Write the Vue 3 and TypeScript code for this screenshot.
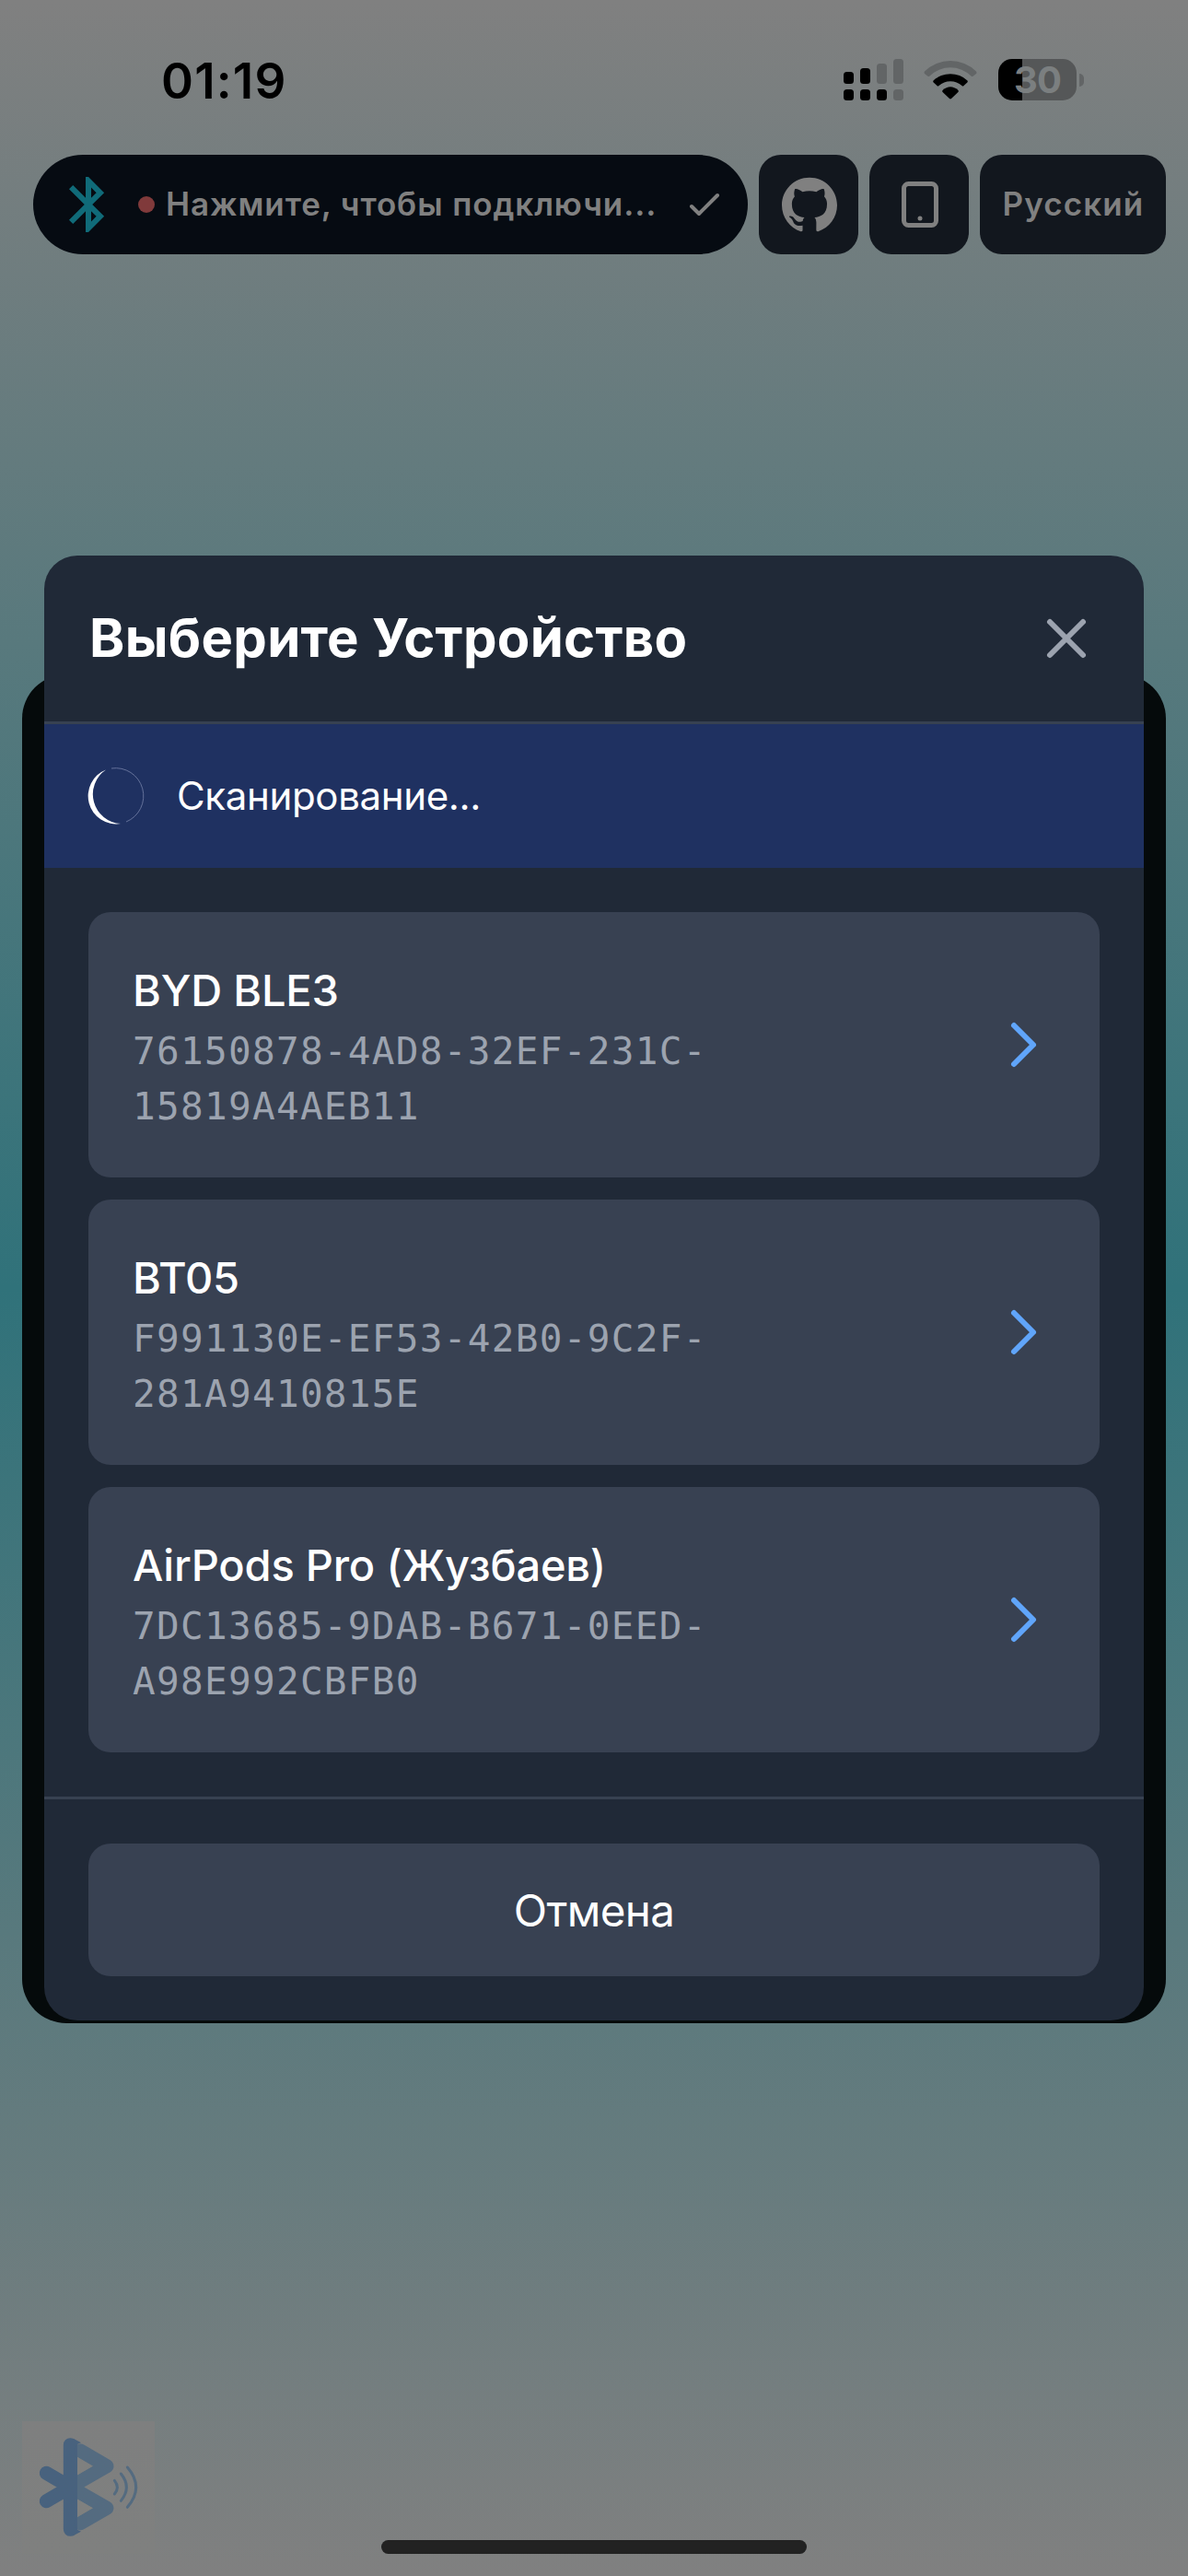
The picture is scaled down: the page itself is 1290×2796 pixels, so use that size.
<script setup lang="ts">
interface Device {
  name: string
  id: string[]
}

const devices: Device[] = [
  { name: 'BYD BLE3', id: ['76150878-4AD8-32EF-231C-', '15819A4AEB11'] },
  { name: 'BT05', id: ['F991130E-EF53-42B0-9C2F-', '281A9410815E'] },
  { name: 'AirPods Pro (Жузбаев)', id: ['7DC13685-9DAB-B671-0EED-', 'A98E992CBFB0'] },
]
</script>

<template>
  <div class="screen">
    <div class="status">
      <span class="time">01:19</span>
      <div class="indicators">
        <svg class="signal" width="65" height="45" viewBox="0 0 65 45">
          <g fill="#000">
            <rect x="0" y="14" width="11" height="13" rx="3.5" />
            <rect x="18" y="10" width="11" height="17" rx="3.5" />
            <rect x="0" y="33" width="11" height="12" rx="3.5" />
            <rect x="18" y="33" width="11" height="12" rx="3.5" />
            <rect x="36" y="33" width="11" height="12" rx="3.5" />
          </g>
          <g fill="#626566">
            <rect x="36" y="5" width="11" height="22" rx="3.5" />
            <rect x="54" y="0" width="11" height="27" rx="3.5" />
            <rect x="54" y="33" width="11" height="12" rx="3.5" />
          </g>
        </svg>
        <svg class="wifi" width="58" height="45" viewBox="0 0 58 45">
          <path d="M1 13.5 A40 40 0 0 1 57 13.5 Q58 15 57 16 L53.500 18.700 Q52.500 19.500 51.500 18.500 A32 32 0 0 0 6.500 18.500 Q5.500 19.500 4.500 18.700 L1 16 Q0 15 1 13.500Z" fill="#626566" />
          <path d="M10.500 23.500 A27 27 0 0 1 47.500 23.500 Q48.200 24.500 47.300 25.500 L43.500 29 Q42.500 30 41.500 29 A18.500 18.500 0 0 0 16.500 29 Q15.500 30 14.500 29 L10.700 25.500 Q9.800 24.500 10.500 23.500Z" fill="#000" />
          <path d="M20.500 34 Q29 26.500 37.500 34 Q38.300 35 37.400 36 L30 43 Q29 43.900 28 43 L20.600 36 Q19.700 35 20.500 34Z" fill="#000" />
        </svg>
        <div class="battery">
          <span class="battery-body"><span class="battery-level">30</span></span>
          <span class="battery-tip"></span>
        </div>
      </div>
    </div>

    <header class="topbar">
      <div class="connect">
        <svg width="72" height="72" viewBox="0 0 24 24" fill="#106b79">
          <path d="M14.880 16.290L13 18.170v-3.760l1.880 1.880zM13 5.830l1.880 1.880L13 9.580V5.830zm4.710 1.880L12 2h-1v7.580L6.410 5 5 6.410 10.590 12 5 17.580 6.410 19 11 14.410V22h1l5.710-5.710L13.410 12l4.300-4.290z" fill-rule="evenodd" />
        </svg>
        <span class="dot"></span>
        <span class="connect-text">Нажмите, чтобы подключи...</span>
        <svg class="check" width="48" height="48" viewBox="0 0 24 24" fill="none" stroke="#808080" stroke-width="2" stroke-linecap="round" stroke-linejoin="round">
          <path d="M5 13l4 4L19 7" />
        </svg>
      </div>
      <div class="tool">
        <svg class="github" width="60" height="60" viewBox="0 0 24 24" fill="#808080">
          <path d="M12 .297c-6.630 0-12 5.373-12 12 0 5.303 3.438 9.800 8.205 11.385.600.113.820-.258.820-.577 0-.285-.010-1.040-.015-2.040-3.338.724-4.042-1.610-4.042-1.610C4.422 18.070 3.633 17.700 3.633 17.700c-1.087-.744.084-.729.084-.729 1.205.084 1.838 1.236 1.838 1.236 1.070 1.835 2.809 1.305 3.495.998.108-.776.417-1.305.760-1.605-2.665-.300-5.466-1.332-5.466-5.930 0-1.310.465-2.380 1.235-3.220-.135-.303-.540-1.523.105-3.176 0 0 1.005-.322 3.300 1.230.960-.267 1.980-.399 3-.405 1.020.006 2.040.138 3 .405 2.280-1.552 3.285-1.230 3.285-1.230.645 1.653.240 2.873.120 3.176.765.840 1.230 1.910 1.230 3.220 0 4.610-2.805 5.625-5.475 5.920.420.360.810 1.096.810 2.220 0 1.606-.015 2.896-.015 3.286 0 .315.210.690.825.570C20.565 22.092 24 17.592 24 12.297c0-6.627-5.373-12-12-12" />
        </svg>
      </div>
      <div class="tool">
        <svg class="tablet" width="60" height="60" viewBox="0 0 24 24" fill="none" stroke="#808080" stroke-width="2" stroke-linecap="round" stroke-linejoin="round">
          <path d="M12 18h.01M7 21h10a2 2 0 002-2V5a2 2 0 00-2-2H7a2 2 0 00-2 2v14a2 2 0 002 2z" />
        </svg>
      </div>
      <div class="tool lang"><span>Русский</span></div>
    </header>

    <main class="panel"></main>

    <footer class="bottom">
      <div class="logo">
        <svg width="144" height="144" viewBox="0 0 432 432" fill="none" stroke-linecap="round" stroke-linejoin="round">
          <path d="M190 96L276 146L157 214.500L276 283L190 332" stroke="#546b80" stroke-width="45" />
          <path d="M79 169L157 214.500L79 260M157 77V352" stroke="#48627e" stroke-width="45" />
          <path d="M168 57L192 70Q168 76 168 104L180 118V310L168 325Q168 352 192 359L168 372Z" fill="#48627e" />
          <path d="M180 118L229 146L180 175ZM180 254L229 283L180 312Z" fill="#7f807f" />
          <path d="M301 193Q319 215 301 237M322 171Q358 215 322 259M343 150Q399 215 343 280" stroke="#546b80" stroke-width="9" />
        </svg>
      </div>
      <div class="home"></div>
    </footer>

    <div class="overlay">
      <section class="modal">
        <div class="modal-head">
          <h2>Выберите Устройство</h2>
          <svg width="72" height="72" viewBox="0 0 24 24" fill="none" stroke="#9ca3af" stroke-width="2" stroke-linecap="round">
            <path d="M6 18L18 6M6 6l12 12" />
          </svg>
        </div>
        <div class="scan">
          <svg width="62" height="62" viewBox="0 0 62 62">
            <path d="M20 2.500A30.500 30.500 0 0 0 36 61A32 32 0 0 1 20 2.500Z" fill="#fff" />
            <path d="M26 1A30.300 30.300 0 0 1 42 59" fill="none" stroke="#64719a" stroke-width="1" />
          </svg>
          <span>Сканирование...</span>
        </div>
        <div class="list">
          <div v-for="d in devices" :key="d.name" class="device">
            <div class="info">
              <div class="name">{{ d.name }}</div>
              <div v-for="part in d.id" :key="part" class="id">{{ part }}</div>
            </div>
            <svg width="72" height="72" viewBox="0 0 24 24" fill="none" stroke="#60a5fa" stroke-width="2" stroke-linecap="round" stroke-linejoin="round">
              <path d="M9 5l7 7-7 7" />
            </svg>
          </div>
        </div>
        <div class="actions">
          <button class="cancel"><span>Отмена</span></button>
        </div>
      </section>
    </div>
  </div>
</template>

<style>
body {
  margin: 0;
}
</style>

<style scoped>
.screen {
  position: relative;
  width: 1290px;
  height: 2796px;
  overflow: hidden;
  display: flex;
  flex-direction: column;
  box-sizing: border-box;
  background: linear-gradient(180deg, #808080 0%, #30727a 50%, #808080 100%);
  font-family: Inter, "Liberation Sans", sans-serif;
  white-space: nowrap;
}
.screen * {
  box-sizing: border-box;
}
svg {
  display: block;
  flex: none;
}
.status {
  height: 168px;
  flex: none;
  display: flex;
  justify-content: space-between;
  padding: 64px 113px 0 175px;
}
.time {
  font-size: 53px;
  line-height: 49px;
  font-weight: 600;
  letter-spacing: 1.2px;
  color: #000;
}
.indicators {
  display: flex;
  height: 45px;
}
.wifi {
  margin-left: 22px;
}
.battery {
  display: flex;
  align-items: center;
  gap: 3px;
  margin-left: 23px;
}
.battery-body {
  width: 85px;
  height: 45px;
  border-radius: 15px;
  background: linear-gradient(90deg, #000 26px, #555758 26px);
  display: flex;
  justify-content: center;
  align-items: center;
}
.battery-level {
  font-size: 40px;
  line-height: 45px;
  font-weight: 700;
  letter-spacing: -0.8px;
  color: #7b7f80;
}
.battery-tip {
  width: 5px;
  height: 14px;
  border-radius: 0 5px 5px 0;
  background: #626566;
}
.topbar {
  flex: none;
  height: 108px;
  display: flex;
  gap: 12px;
  padding: 0 24px 0 36px;
  color: #808080;
  font-size: 35px;
  font-weight: 600;
}
.connect {
  width: 776px;
  border-radius: 54px;
  background: #060b12;
  display: flex;
  align-items: center;
  padding: 0 23px 0 24px;
}
.dot {
  width: 18px;
  height: 18px;
  border-radius: 50%;
  background: #803a3b;
  margin: 0 12px 0 18px;
}
.connect-text {
  flex: 1;
  padding-bottom: 2px;
  letter-spacing: 0.9px;
}
.tool {
  width: 108px;
  border-radius: 24px;
  background: #12171e;
  display: flex;
  align-items: center;
  justify-content: center;
}
.github {
  margin-left: 2px;
}
.tablet {
  margin-left: 2px;
}
.lang {
  width: 202px;
  padding: 0 0 2px 1px;
  letter-spacing: 1.1px;
}
.panel {
  flex: none;
  height: 1464px;
  margin: 456px 24px 0;
  border-radius: 48px;
  background: #050a0b;
}
.bottom {
  flex: 1;
  display: flex;
  align-items: flex-end;
  padding: 0 24px 24px;
}
.logo {
  width: 144px;
  height: 144px;
  background: linear-gradient(180deg, #7e7f7f, #7f807f);
}
.home {
  width: 462px;
  height: 15px;
  margin-left: 246px;
  border-radius: 8px;
  background: #222;
}
.overlay {
  position: absolute;
  inset: 0;
  display: flex;
  align-items: center;
  justify-content: center;
}
.modal {
  width: 1194px;
  border-radius: 36px;
  overflow: hidden;
  background: #202937;
  color: #fff;
}
.modal-head {
  height: 183px;
  padding: 0 48px 0 49px;
  display: flex;
  align-items: center;
  justify-content: space-between;
  border-bottom: 3px solid #374151;
}
.modal-head h2 {
  margin: 0;
  padding-bottom: 2px;
  font-size: 58px;
  line-height: 84px;
  font-weight: 700;
  letter-spacing: 0.3px;
}
.scan {
  height: 156px;
  background: #1f3161;
  display: flex;
  align-items: center;
  gap: 35px;
  padding-left: 47px;
  font-size: 42px;
  letter-spacing: -0.35px;
}
.scan span {
  padding-bottom: 2px;
}
.list {
  display: flex;
  flex-direction: column;
  gap: 24px;
  padding: 48px;
}
.device {
  height: 288px;
  padding: 48px;
  border-radius: 24px;
  background: #384152;
  display: flex;
  align-items: center;
  justify-content: space-between;
}
.info {
  padding-top: 2px;
}
.name {
  font-size: 47px;
  line-height: 72px;
  font-weight: 500;
  letter-spacing: -0.2px;
}
.id {
  font-family: "DejaVu Sans Mono", "Liberation Mono", monospace;
  font-size: 41px;
  line-height: 60px;
  letter-spacing: 1.3px;
  color: #9ca3af;
}
.actions {
  border-top: 3px solid #374151;
  padding: 48px;
}
.cancel {
  display: block;
  width: 100%;
  height: 144px;
  border: 0;
  border-radius: 24px;
  background: #384152;
  color: #fff;
  font-family: inherit;
  font-size: 47.500px;
  letter-spacing: -0.6px;
}
</style>
